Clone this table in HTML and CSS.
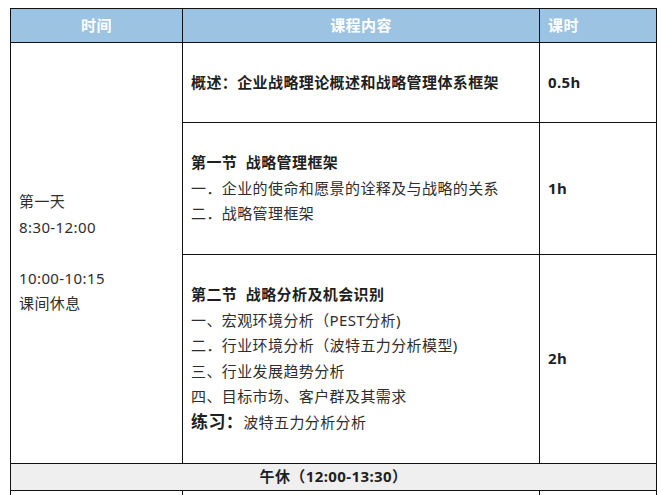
FILE: index.html
```html
<!DOCTYPE html>
<html lang="zh-CN">
<head>
<meta charset="utf-8">
<title>课程安排</title>
<link rel="stylesheet" href="styles.css">
</head>
<body>
<table class="schedule">
  <colgroup>
    <col class="c-time">
    <col class="c-content">
    <col class="c-hours">
  </colgroup>
  <thead>
    <tr class="r-head">
      <th class="center">时间</th>
      <th class="center">课程内容</th>
      <th class="left">课时</th>
    </tr>
  </thead>
  <tbody>
    <tr class="r-1">
      <td class="time" rowspan="3">
        <div>第一天</div>
        <div>8:30-12:00</div>
        <div>&nbsp;</div>
        <div>10:00-10:15</div>
        <div>课间休息</div>
      </td>
      <td class="content"><div class="b">概述：企业战略理论概述和战略管理体系框架</div></td>
      <td class="hours">0.5h</td>
    </tr>
    <tr class="r-2">
      <td class="content">
        <div class="b">第一节&nbsp;&nbsp;战略管理框架</div>
        <div>一．企业的使命和愿景的诠释及与战略的关系</div>
        <div>二．战略管理框架</div>
      </td>
      <td class="hours">1h</td>
    </tr>
    <tr class="r-3">
      <td class="content">
        <div class="b">第二节&nbsp;&nbsp;战略分析及机会识别</div>
        <div>一、宏观环境分析（PEST分析)</div>
        <div>二．行业环境分析（波特五力分析模型)</div>
        <div>三、行业发展趋势分析</div>
        <div>四、目标市场、客户群及其需求</div>
        <div><span class="practice">练习：</span>波特五力分析分析</div>
      </td>
      <td class="hours">2h</td>
    </tr>
    <tr class="r-lunch">
      <td class="lunch" colspan="3">午休（12:00-13:30）</td>
    </tr>
    <tr class="r-next">
      <td></td>
      <td></td>
      <td></td>
    </tr>
  </tbody>
</table>
</body>
</html>
```

FILE: styles.css
```css
html, body {
  margin: 0;
  padding: 0;
  background: #ffffff;
}

body {
  font-family: "Noto Sans", "Noto Sans CJK SC", sans-serif;
  font-size: 15px;
  color: #2e2e2e;
  letter-spacing: 0.4px;
}

.schedule {
  margin: 8px 0 0 10px;
  border-collapse: collapse;
  table-layout: fixed;
  width: 646px;
}

.c-time { width: 172px; }
.c-content { width: 357px; }
.c-hours { width: 117px; }

.schedule th,
.schedule td {
  border: 1px solid #111111;
  padding: 0 8px;
  vertical-align: middle;
  line-height: 25.4px;
}

.schedule th {
  background: #9dc3e3;
  color: #ffffff;
  font-weight: 700;
}

.center { text-align: center; }
.left { text-align: left; }

.r-head th { height: 33px; }
.r-1 td { height: 79px; }
.r-2 td { height: 131px; }
.r-3 td { height: 208px; }
.r-lunch td { height: 26px; }
.r-next td { height: 4px; }

.time {
  padding-left: 7px;
}

.content {
  padding-left: 9px;
}

.b {
  font-weight: 700;
  color: #1f1f1f;
}

.practice {
  font-weight: 700;
  font-size: 17px;
  color: #1f1f1f;
}

.hours {
  font-weight: 700;
  color: #1f1f1f;
  padding-left: 8px;
}

.lunch {
  background: #efefef;
  text-align: center;
  font-weight: 700;
  color: #1f1f1f;
}
```
